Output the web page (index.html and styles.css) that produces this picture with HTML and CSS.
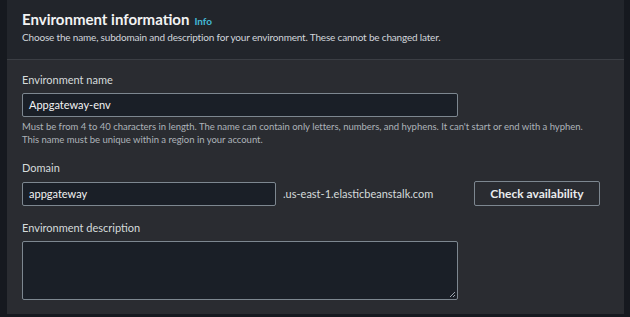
FILE: index.html
```html
<!DOCTYPE html>
<html>
<head>
<meta charset="utf-8">
<link rel="stylesheet" href="styles.css">
</head>
<body>
<div class="page">
  <section class="panel">
    <header class="panel-header">
      <h2 class="title">Environment information <a class="info">Info</a></h2>
      <p class="subtitle">Choose the name, subdomain and description for your environment. These cannot be changed later.</p>
    </header>
    <div class="panel-body">
      <div class="field">
        <label class="label">Environment name</label>
        <div class="input wide">Appgateway-env</div>
        <p class="hint">Must be from 4 to 40 characters in length. The name can contain only letters, numbers, and hyphens. It can't start or end with a hyphen.<br>This name must be unique within a region in your account.</p>
      </div>
      <div class="field">
        <label class="label">Domain</label>
        <div class="domain-row">
          <div class="input">appgateway</div>
          <span class="suffix">.us-east-1.elasticbeanstalk.com</span>
          <button class="btn">Check availability</button>
        </div>
      </div>
      <div class="field">
        <label class="label">Environment description</label>
        <div class="textarea">
          <svg class="grip" width="8" height="8" viewBox="0 0 8 8"><path d="M7 2 L2 7 M7 5 L5 7" stroke="#9aa3ad" stroke-width="1"/></svg>
        </div>
      </div>
    </div>
  </section>
</div>
</body>
</html>
```
FILE: styles.css
```css
* { box-sizing: border-box; }
html, body { margin: 0; padding: 0; }
body {
  background: #16191f;
  font-family: Lato, "Open Sans", sans-serif;
  width: 630px;
  height: 317px;
  overflow: hidden;
}
.page {
  padding-left: 7px;
  width: 624px;
}
.panel {
  background: #2a2c31;
  height: 314px;
}
.panel-header {
  background: #22252b;
  height: 60px;
  border-bottom: 1px solid #3b3e44;
  padding: 10px 15px 0;
}
.title {
  margin: 0;
  font-size: 15px;
  line-height: 19px;
  font-weight: 700;
  color: #f2f3f3;
  display: flex;
  align-items: baseline;
  gap: 5px;
}
.info {
  font-size: 10px;
  color: #44b9d6;
  font-weight: 700;
}
.subtitle {
  margin: 0;
  font-size: 10px;
  line-height: 13px;
  letter-spacing: -0.18px;
  color: #d1d5db;
}
.panel-body {
  padding: 12px 15px 0;
  display: flex;
  flex-direction: column;
  gap: 14px;
}
.field {
  display: flex;
  flex-direction: column;
}
.label {
  font-size: 11px;
  line-height: 16px;
  color: #d5dbdb;
  margin-bottom: 5px;
}
.input {
  height: 24px;
  background: #1a1f27;
  border: 1px solid #7d8790;
  border-radius: 2px;
  color: #f2f3f3;
  font-size: 11px;
  line-height: 22px;
  padding: 0 6px;
}
.wide { width: 436px; }
.hint {
  margin: 3px 0 0;
  font-size: 9.5px;
  line-height: 13px;
  letter-spacing: -0.02px;
  color: #adb3b9;
}
.domain-row {
  display: grid;
  grid-template-columns: 254px 198px 126px;
  align-items: center;
}
.suffix {
  padding-left: 7px;
  font-size: 11px;
  color: #d5dbdb;
}
.btn {
  height: 25px;
  background: transparent;
  border: 1px solid #7d8790;
  border-radius: 2px;
  color: #e9ebed;
  font-family: inherit;
  font-size: 12px;
  font-weight: 700;
  padding: 0;
}
.textarea {
  position: relative;
  width: 436px;
  height: 59px;
  background: #1a1f27;
  border: 1px solid #7d8790;
  border-radius: 2px;
}
.grip {
  position: absolute;
  right: 1px;
  bottom: 1px;
}
```
